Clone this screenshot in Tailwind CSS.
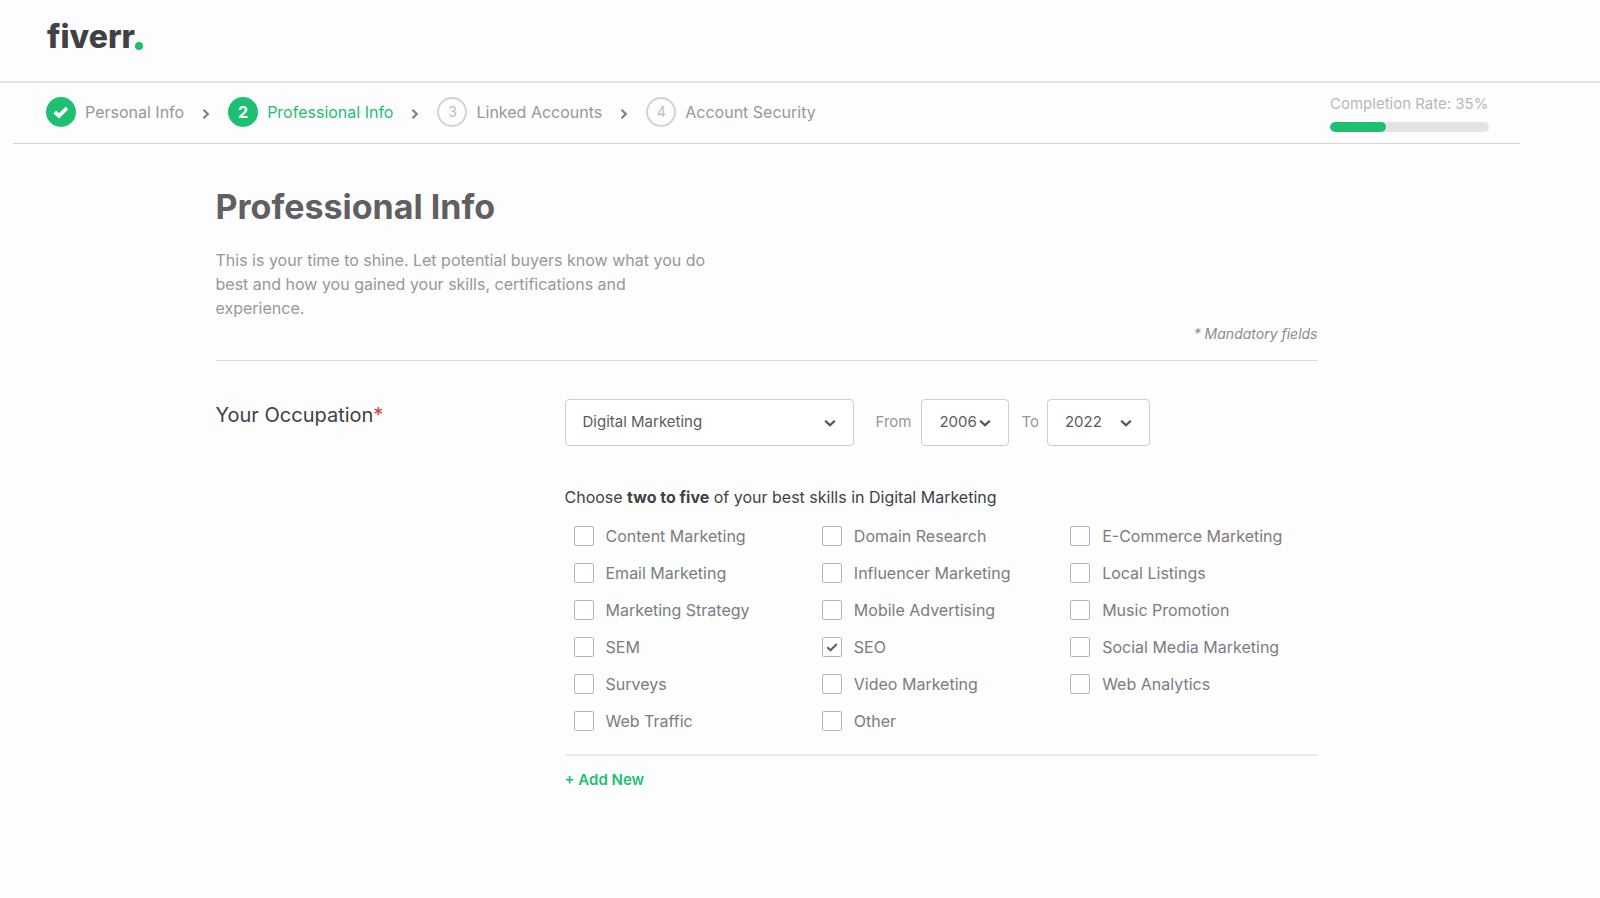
<!DOCTYPE html>
<html lang="en">
<head>
    <meta charset="UTF-8">
    <meta name="viewport" content="width=device-width, initial-scale=1.0">
    <title>Fiverr - Professional Info</title>
    <script src="https://cdn.jsdelivr.net/npm/@tailwindcss/browser@4"></script>
</head>
<body class="min-h-screen bg-[#fdfdfd] font-['Inter',sans-serif] text-[#404145]">

    <header class="flex h-[83px] items-center border-b-2 border-[#e0e0e0] px-[47px] pb-2">
        <a href="#" class="flex items-end text-[32px] leading-10 font-extrabold text-[#404145]">fiverr<span class="mb-[7px] h-2 w-2 rounded-full bg-[#1dbf73]"></span></a>
    </header>

    <div class="pr-20 pl-[13px]">

        <!-- steps -->
        <nav class="flex h-[61px] items-center justify-between border-b border-[#d4d4d4] pr-[31px] pb-[3px] pl-[33px]">
            <ol class="flex items-center text-base text-[#97979a]">
                <li class="flex items-center">
                    <span class="flex h-[30px] w-[30px] items-center justify-center rounded-full bg-[#1dbf73]">
                        <svg class="h-4 w-4" viewBox="0 0 16 16" fill="none" stroke="#fff" stroke-width="3.8"><path d="M1.8 8 6 11.8 14 4"/></svg>
                    </span>
                    <a href="#" class="ml-[9px]">Personal Info</a>
                    <svg class="mx-[18px] mt-1 h-3 w-2" viewBox="0 0 8 12" fill="none" stroke="#808084" stroke-width="2.2"><path d="M1.5 1.8 5.8 6 1.5 10.2"/></svg>
                </li>
                <li class="flex items-center">
                    <span class="flex h-[30px] w-[30px] items-center justify-center rounded-full bg-[#1dbf73] text-base font-bold text-white">2</span>
                    <a href="#" class="ml-[9px] text-[#1dbf73]">Professional Info</a>
                    <svg class="mx-[18px] mt-1 h-3 w-2" viewBox="0 0 8 12" fill="none" stroke="#808084" stroke-width="2.2"><path d="M1.5 1.8 5.8 6 1.5 10.2"/></svg>
                </li>
                <li class="flex items-center">
                    <span class="flex h-[30px] w-[30px] items-center justify-center rounded-full border-2 border-[#d2d2d2] text-sm text-[#bdbdbd]">3</span>
                    <a href="#" class="ml-[9px]">Linked Accounts</a>
                    <svg class="mx-[18px] mt-1 h-3 w-2" viewBox="0 0 8 12" fill="none" stroke="#808084" stroke-width="2.2"><path d="M1.5 1.8 5.8 6 1.5 10.2"/></svg>
                </li>
                <li class="flex items-center">
                    <span class="flex h-[30px] w-[30px] items-center justify-center rounded-full border-2 border-[#d2d2d2] text-sm text-[#bdbdbd]">4</span>
                    <a href="#" class="ml-[9px]">Account Security</a>
                </li>
            </ol>
            <div class="w-[159px] pt-0.5">
                <p class="text-[15px] leading-5 whitespace-nowrap text-[#b8b8ba]">Completion Rate: 35%</p>
                <div class="mt-2 h-[10px] overflow-hidden rounded-full bg-[#e4e4e4]">
                    <div class="h-full rounded-full bg-[#1dbf73]" style="width: 35%"></div>
                </div>
            </div>
        </nav>

        <main class="mx-auto max-w-[1102px] pt-10">
            <h1 class="text-[34px] leading-[46px] font-bold text-[#606063]">Professional Info</h1>
            <p class="mt-[18px] max-w-[500px] text-base text-[#97979a]">This is your time to shine. Let potential buyers know what you do best and how you gained your skills, certifications and experience.</p>
            <p class="mt-1 border-b border-[#dcdcdc] pb-4 text-right text-sm text-[#8b8b8e] italic">* Mandatory fields</p>

            <form class="flex pt-[38px]">
                <label for="occupation" class="w-[349px] shrink-0 text-xl leading-8">Your Occupation<span class="text-[#e0393e]">*</span></label>

                <div class="flex-1">
                    <div class="flex items-center text-[15px] text-[#97979a]">
                        <div class="relative w-[289px]">
                            <select id="occupation" class="h-[47px] w-full appearance-none rounded-sm border border-[#cfcfcf] bg-white pl-[17px] text-[#5c5c60]">
                                <option>Digital Marketing</option>
                            </select>
                            <svg class="pointer-events-none absolute top-[18px] right-[18px] h-3 w-3" viewBox="0 0 12 12" fill="none" stroke="#505054" stroke-width="2.2"><path d="M1.2 3.8 6 8.2 10.8 3.8"/></svg>
                        </div>
                        <label for="from" class="mr-[10px] ml-[22px]">From</label>
                        <div class="relative w-[88px]">
                            <select id="from" class="h-[47px] w-full appearance-none rounded-sm border border-[#cfcfcf] bg-white pl-[17px] text-[#5c5c60]">
                                <option>2006</option>
                            </select>
                            <svg class="pointer-events-none absolute top-[18px] right-[18px] h-3 w-3" viewBox="0 0 12 12" fill="none" stroke="#505054" stroke-width="2.2"><path d="M1.2 3.8 6 8.2 10.8 3.8"/></svg>
                        </div>
                        <label for="to" class="mr-2 ml-3">To</label>
                        <div class="relative w-[103px]">
                            <select id="to" class="h-[47px] w-full appearance-none rounded-sm border border-[#cfcfcf] bg-white pl-[17px] text-[#5c5c60]">
                                <option>2022</option>
                            </select>
                            <svg class="pointer-events-none absolute top-[18px] right-[18px] h-3 w-3" viewBox="0 0 12 12" fill="none" stroke="#505054" stroke-width="2.2"><path d="M1.2 3.8 6 8.2 10.8 3.8"/></svg>
                        </div>
                    </div>

                    <p class="mt-[39px] text-base">Choose <b class="font-bold">two to five</b> of your best skills in Digital Marketing</p>

                    <div id="skills" class="mt-[15px] grid grid-cols-3 gap-x-px gap-y-[13px] border-b-2 border-[#ebebeb] pb-[21px] pl-[9px]"></div>

                    <button type="button" class="mt-[13px] text-[15px] font-semibold text-[#1dbf73]">+ Add New</button>
                </div>
            </form>
        </main>
    </div>

    <script>
        const skills = [
            'Content Marketing', 'Domain Research', 'E-Commerce Marketing',
            'Email Marketing', 'Influencer Marketing', 'Local Listings',
            'Marketing Strategy', 'Mobile Advertising', 'Music Promotion',
            'SEM', 'SEO', 'Social Media Marketing',
            'Surveys', 'Video Marketing', 'Web Analytics',
            'Web Traffic', 'Other'
        ];
        const selected = ['SEO'];

        document.getElementById('skills').innerHTML = skills.map(skill => `
            <label class="relative flex items-center gap-3 text-base text-[#7c7c80]">
                <input type="checkbox" class="peer h-5 w-5 shrink-0 appearance-none rounded-xs border border-[#b5b5b8] bg-white" ${selected.includes(skill) ? 'checked' : ''}>
                <svg class="pointer-events-none absolute left-1 hidden h-3 w-3 peer-checked:block" viewBox="0 0 12 12" fill="none" stroke="#626266" stroke-width="2.2"><path d="M1.2 6.2 4.5 9.2 10.8 3"/></svg>
                <span>${skill}</span>
            </label>`).join('');
    </script>
</body>
</html>
